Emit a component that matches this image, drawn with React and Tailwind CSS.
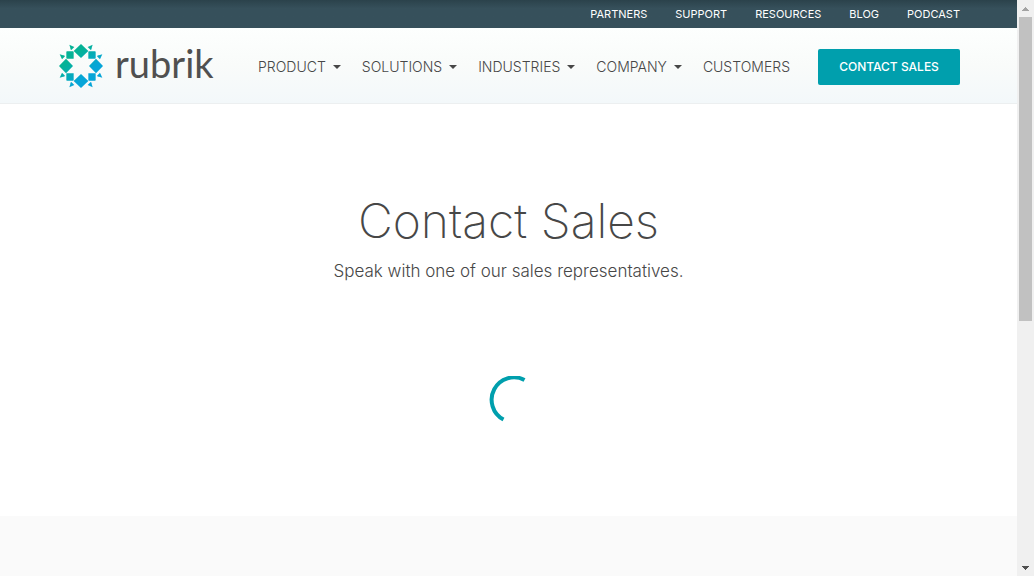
const topLinks = ['Partners', 'Support', 'Resources', 'Blog', 'Podcast'];
const menus = ['Product', 'Solutions', 'Industries', 'Company'];

function LogoMark() {
  return (
    <svg className="size-11" viewBox="11 11 132 132" aria-hidden="true">
      <defs>
        <linearGradient id="mark" gradientUnits="userSpaceOnUse" x1="40" y1="35" x2="110" y2="115">
          <stop offset="0.2" stopColor="#05b296" />
          <stop offset="0.8" stopColor="#06a5d8" />
        </linearGradient>
      </defs>
      <g fill="url(#mark)">
        <path d="M77 11l22 21-22 21-22-21zM77 101l22 21-22 21-22-21zM32 55l21 22-21 22-21-22zM122 55l21 22-21 22-21-22z" />
        <path d="M35 33h18q2 0 2 2v20H35q-2 0-2-2V35q0-2 2-2zM101 33h18q2 0 2 2v18q0 2-2 2H99V35q0-2 2-2zM33 99h22v20q0 2-2 2H35q-2 0-2-2zM99 99h22v20q0 2-2 2h-18q-2 0-2-2z" />
        <path d="M42 13l15 7-9 9q-4-2-3-6zM112 13l-15 7 9 9q4-2 3-6zM42 141l15-7-9-9q-4 2-3 6zM112 141l-15-7 9-9q4 2 3 6zM13 42l7 15 9-9q-2-4-6-3zM141 42l-7 15-9-9q2-4 6-3zM13 112l7-15 9 9q-2 4-6 3zM141 112l-7-15-9 9q2 4 6 3z" />
      </g>
    </svg>
  );
}

function Spinner() {
  return (
    <svg className="h-12 w-10" viewBox="0 0 40 48" fill="none" role="status" aria-label="Loading">
      <path d="M35.5 4A22.3 22.3 0 0 0 14.5 43.5" stroke="#009fad" strokeWidth="4" />
    </svg>
  );
}

function ScrollRail() {
  return (
    <div className="sticky top-0 flex h-screen w-[17px] shrink-0 flex-col items-center bg-[#f0f0f0]" aria-hidden="true">
      <div className="flex h-[17px] items-center">
        <svg className="h-1 w-[7px]" viewBox="0 0 7 4" fill="#a3a3a3" shapeRendering="crispEdges">
          <path d="M3 0h1v1h1v1h1v1h1v1H0V3h1V2h1V1h1z" />
        </svg>
      </div>
      <div className="flex w-full flex-1 flex-col items-center">
        <div className="h-[56%] w-[13px] bg-[#c1c1c1]" />
      </div>
      <div className="flex h-[17px] items-center">
        <svg className="h-1 w-[7px]" viewBox="0 0 7 4" fill="#505050" shapeRendering="crispEdges">
          <path d="M0 0h7v1H6v1H5v1H4v1H3V3H2V2H1V1H0z" />
        </svg>
      </div>
    </div>
  );
}

export default function App() {
  return (
    <div className="flex min-h-screen bg-white font-['Inter',sans-serif] text-[#474747]">
      <div className="flex min-w-0 flex-1 flex-col">
        <nav
          aria-label="Secondary"
          className="flex h-7 items-center justify-end gap-7 bg-[#36505b] bg-linear-to-b from-[#2b424b] to-[#36505b] to-30% pr-[57px] text-[11px] text-white uppercase"
        >
          {topLinks.map((label) => (
            <a key={label} href="#">
              {label}
            </a>
          ))}
        </nav>

        <header className="flex h-[76px] items-center justify-between border-b border-[#eceff0] bg-linear-to-b from-[#fdfffe] via-[#f9fbfa] to-[#f3f8fa] pt-0.5 pr-[57px] pl-[59px]">
          <a href="#" className="flex items-center gap-3 pb-px">
            <LogoMark />
            <span className="pb-1.5 font-['Lato',sans-serif] text-[38px] leading-10 text-[#505050]">rubrik</span>
          </a>
          <nav aria-label="Main" className="flex items-center text-[14px]">
            <div className="flex items-center gap-[21px] pr-7">
              {menus.map((label) => (
                <button key={label} type="button" className="flex items-center gap-[7px] font-light uppercase">
                  {label}
                  <svg className="h-1 w-2" viewBox="0 0 8 4" fill="#474747" aria-hidden="true">
                    <path d="M0 0h8L4 4z" />
                  </svg>
                </button>
              ))}
              <a href="#" className="font-light uppercase">
                Customers
              </a>
            </div>
            <a href="#" className="flex h-9 w-[142px] items-center justify-center rounded-[2px] bg-[#009fad] text-[12px] font-medium text-white uppercase">
              Contact Sales
            </a>
          </nav>
        </header>

        <main className="flex flex-col items-center pt-[87px] pb-[92px]">
          <h1 className="text-[48px] leading-[60px] font-extralight">Contact Sales</h1>
          <p className="mt-2 mb-[93px] text-[17px] leading-6 font-light">Speak with one of our sales representatives.</p>
          <Spinner />
        </main>

        <footer className="min-h-[60px] flex-1 bg-[#fafafa]" />
      </div>
      <ScrollRail />
    </div>
  );
}
